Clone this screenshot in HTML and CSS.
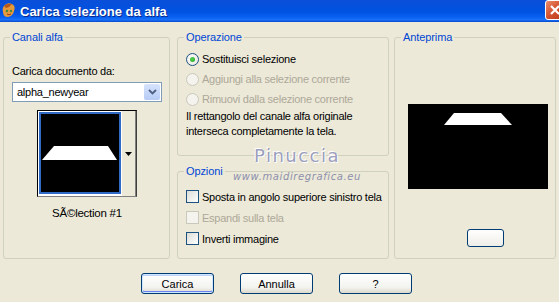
FILE: index.html
```html
<!DOCTYPE html>
<html lang="it">
<head>
  <meta charset="UTF-8">
  <title>Carica selezione da alfa</title>
  <link rel="stylesheet" href="styles.css">
</head>
<body>
  <div class="finestra">
    <div class="titolo">
      <svg class="icona" width="16" height="18" viewBox="0 0 16 18">
        <path d="M3,4 Q6,0 11,2 Q15,4 13,9 Q12,14 7,15 Q2,15 2,10 Q1,6 3,4Z" fill="#e59a3c"/>
        <path d="M3,4 Q6,1 11,2 Q9,5 5,6Z" fill="#b5561d"/>
        <circle cx="6" cy="9" r="1.2" fill="#4a8a3a"/>
        <circle cx="10" cy="9" r="1.2" fill="#4a8a3a"/>
        <path d="M6,12 Q8,13.5 10,12" stroke="#a03a1a" stroke-width="1" fill="none"/>
      </svg>
      <span class="titolo-testo">Carica selezione da alfa</span>
      <span class="chiudi">
        <svg width="14" height="14" viewBox="0 0 14 14">
          <path d="M3,3 L11,11 M11,3 L3,11" stroke="#fff" stroke-width="2.2"/>
        </svg>
      </span>
    </div>

    <div class="corpo">
      <fieldset class="gruppo canali">
        <legend>Canali alfa</legend>
        <div class="contenuto">
          <div class="etichetta">Carica documento da:</div>
          <div class="tendina">
            <span>alpha_newyear</span>
            <span class="tendina-btn">
              <svg width="9" height="6" viewBox="0 0 9 6"><path d="M1,1 L4.5,4.5 L8,1" stroke="#4d6185" stroke-width="1.8" fill="none"/></svg>
            </span>
          </div>
          <div class="miniatura">
            <div class="miniatura-img">
              <svg width="78" height="78" viewBox="0 0 78 78">
                <rect width="78" height="78" fill="#000"/>
                <polygon points="13,32 67,32 76,46 1,46" fill="#fff"/>
              </svg>
            </div>
            <div class="miniatura-freccia">
              <svg width="7" height="4" viewBox="0 0 7 4"><polygon points="0,0 7,0 3.5,4" fill="#000"/></svg>
            </div>
          </div>
          <div class="didascalia">SÃ©lection #1</div>
        </div>
      </fieldset>

      <div class="colonna">
        <fieldset class="gruppo operazione">
          <legend>Operazione</legend>
          <div class="contenuto">
            <div class="riga"><span class="radio attivo"></span>Sostituisci selezione</div>
            <div class="riga spento"><span class="radio"></span>Aggiungi alla selezione corrente</div>
            <div class="riga spento"><span class="radio"></span>Rimuovi dalla selezione corrente</div>
            <p class="nota">Il rettangolo del canale alfa originale<br>interseca completamente la tela.</p>
          </div>
        </fieldset>
        <fieldset class="gruppo opzioni">
          <legend>Opzioni</legend>
          <div class="contenuto">
            <div class="riga alta"><span class="casella"></span>Sposta in angolo superiore sinistro tela</div>
            <div class="riga alta spento"><span class="casella"></span>Espandi sulla tela</div>
            <div class="riga alta"><span class="casella"></span>Inverti immagine</div>
          </div>
        </fieldset>
      </div>

      <fieldset class="gruppo anteprima">
        <legend>Anteprima</legend>
        <div class="contenuto">
          <div class="anteprima-img">
            <svg width="140" height="85" viewBox="0 0 140 85">
              <rect width="140" height="85" fill="#000"/>
              <polygon points="46,9 93,9 104,21 36,21" fill="#fff"/>
            </svg>
          </div>
          <div class="mini-btn"></div>
        </div>
      </fieldset>
    </div>

    <div class="pulsanti">
      <button class="btn predefinito" type="button">Carica</button>
      <button class="btn" type="button">Annulla</button>
      <button class="btn" type="button">?</button>
    </div>

    <div class="filigrana">
      <div class="filigrana-nome">Pinuccia</div>
      <div class="filigrana-sito">www.maidiregrafica.eu</div>
    </div>
  </div>
</body>
</html>
```

FILE: styles.css
```css
body {
  margin: 0;
  background: #ece9d8;
  font-family: "Liberation Sans", Arial, sans-serif;
  font-size: 11px;
  letter-spacing: -0.25px;
  color: #000;
}
.finestra {
  position: relative;
  width: 559px;
  height: 302px;
  overflow: hidden;
  background: #ece9d8;
}
.titolo {
  height: 22px;
  display: flex;
  align-items: center;
  background: linear-gradient(#0a4fd8 0%, #0052e2 55%, #0a62f2 80%, #1a72fa 90%, #0848cc 100%);
  color: #fff;
}
.icona {
  margin: 0 3px 0 1px;
}
.titolo-testo {
  font-weight: bold;
  font-size: 13px;
  letter-spacing: 0;
  text-shadow: 1px 1px 0 #0a2a8a;
  flex: 1;
}
.chiudi {
  width: 20px;
  height: 20px;
  margin-right: -6px;
  margin-top: -2px;
  display: flex;
  align-items: center;
  justify-content: center;
  background: linear-gradient(135deg, #ea8d6d, #d3502d 50%, #b83c1c);
  border: 1px solid #fff;
  border-radius: 3px;
  box-sizing: border-box;
}

.corpo {
  display: flex;
  margin: 8px 0 0 3px;
  height: 229px;
}
.gruppo {
  margin: 0;
  padding: 0;
  border: 1px solid #d0d0bf;
  border-radius: 3px;
  min-width: 0;
  box-sizing: border-box;
}
.gruppo legend {
  color: #0046d5;
  padding: 0 2px;
  margin-left: 6px;
  line-height: 14px;
  letter-spacing: -0.1px;
}
.canali {
  width: 167px;
}
.canali .contenuto {
  padding-left: 8px;
}
.etichetta {
  margin-top: 21px;
  line-height: 13px;
}
.tendina {
  margin-top: 4px;
  width: 150px;
  height: 20px;
  box-sizing: border-box;
  border: 1px solid #7f9db9;
  background: #fff;
  display: flex;
  align-items: center;
  padding-left: 4px;
}
.tendina span:first-child {
  flex: 1;
}
.tendina-btn {
  width: 16px;
  height: 16px;
  margin-right: 1px;
  background: linear-gradient(#d6e3fc, #b6cbf6);
  border-radius: 2px;
  display: flex;
  align-items: center;
  justify-content: center;
}
.miniatura {
  margin: 8px 0 0 25px;
  width: 100px;
  height: 87px;
  box-sizing: border-box;
  display: flex;
  border: 1px solid;
  border-color: #000 #404040 #808080 #000;
  background: #fff;
}
.miniatura-img {
  margin: 1px 0 1px 1px;
  border: 2px solid #316ac5;
  width: 78px;
  height: 78px;
  line-height: 0;
}
.miniatura-freccia {
  flex: 1;
  margin-left: 1px;
  background: #ece9d8;
  border-right: 1px solid #808080;
  display: flex;
  align-items: center;
  justify-content: center;
}
.didascalia {
  margin: 10px 0 0 0;
  width: 150px;
  text-align: center;
  line-height: 13px;
  font-size: 11.5px;
}

.colonna {
  display: flex;
  flex-direction: column;
  gap: 8px;
  margin-left: 7px;
  width: 212px;
}
.operazione {
  height: 126px;
}
.opzioni {
  height: 95px;
}
.operazione .contenuto,
.opzioni .contenuto {
  padding-left: 8px;
}
.riga {
  display: flex;
  align-items: center;
  height: 20px;
  gap: 3px;
}
.operazione .riga:first-child {
  margin-top: 5px;
}
.riga.alta {
  height: 21px;
}
.opzioni .riga:first-child {
  margin-top: 8px;
}
.spento {
  color: #aca899;
}
.radio {
  width: 13px;
  height: 13px;
  box-sizing: border-box;
  border-radius: 50%;
  border: 1px solid #1c5180;
  background: radial-gradient(circle at 40% 40%, #fff, #e4e3dc);
  position: relative;
}
.radio.attivo::after {
  content: "";
  position: absolute;
  left: 3px;
  top: 3px;
  width: 5px;
  height: 5px;
  border-radius: 50%;
  background: radial-gradient(circle at 40% 40%, #55d351, #21a121);
}
.spento .radio {
  border-color: #cac8bb;
  background: #f4f3ee;
}
.nota {
  margin: 0;
  line-height: 15px;
  white-space: nowrap;
}
.casella {
  width: 13px;
  height: 13px;
  box-sizing: border-box;
  border: 1px solid #1c5180;
  background: linear-gradient(135deg, #dcdcd7, #fff);
}
.spento .casella {
  border-color: #cac8bb;
  background: #f4f3ee;
}

.anteprima {
  margin-left: 5px;
  width: 162px;
}
.anteprima .contenuto {
  padding-left: 13px;
}
.anteprima-img {
  margin-top: 60px;
  line-height: 0;
}
.mini-btn {
  margin: 40px 0 0 59px;
  width: 37px;
  height: 18px;
  box-sizing: border-box;
  border: 1px solid #003c74;
  border-radius: 3px;
  background: linear-gradient(#fff, #eeede8);
}

.pulsanti {
  display: flex;
  justify-content: center;
  gap: 26px;
  margin: 14px 6px 0 0;
}
.btn {
  width: 73px;
  height: 21px;
  padding: 0;
  border: 1px solid #003c74;
  border-radius: 3px;
  background: linear-gradient(#fff, #f3f3ef 70%, #dcd8cc);
  font-family: "Liberation Sans", Arial, sans-serif;
  font-size: 11px;
  color: #000;
}
.btn.predefinito {
  box-shadow: inset 0 0 0 1px #cee7ff, inset 0 -1px 0 1px #6982ee, inset 0 1px 0 1px #bcd4f6;
}

.filigrana {
  position: absolute;
  left: 230px;
  top: 146px;
  width: 134px;
  text-align: center;
  pointer-events: none;
}
.filigrana-nome {
  font-family: "DejaVu Sans", sans-serif;
  font-size: 18px;
  letter-spacing: 1.5px;
  color: #9c9fbd;
  line-height: 20px;
  text-shadow: 1px 1px 0 #fff, -1px -1px 0 #fff;
}
.filigrana-sito {
  font-family: "DejaVu Sans", sans-serif;
  font-style: italic;
  font-size: 10px;
  letter-spacing: 0.6px;
  color: #8d90ac;
  line-height: 14px;
  margin-top: 4px;
}
```
